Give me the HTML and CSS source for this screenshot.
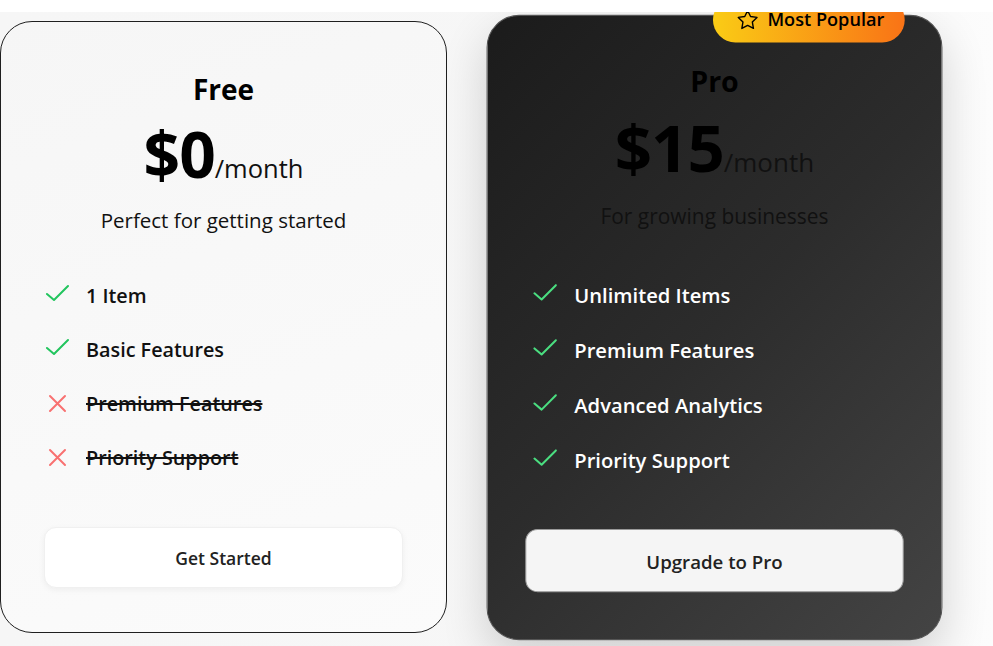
FILE: index.html
```html
<!DOCTYPE html>
<html lang="en">
<head>
<meta charset="utf-8">
<title>Pricing</title>
<link rel="stylesheet" href="styles.css">
</head>
<body>
<section class="stage">
  <article class="card card-free">
    <h2 class="plan">Free</h2>
    <div class="price"><span class="amount">$0</span><span class="period">/month</span></div>
    <p class="tagline">Perfect for getting started</p>
    <ul class="features">
      <li class="feature"><svg class="icon check" viewBox="0 0 24 24"><path d="M2 11 9 17 23 3"/></svg><span>1 Item</span></li>
      <li class="feature"><svg class="icon check" viewBox="0 0 24 24"><path d="M2 11 9 17 23 3"/></svg><span>Basic Features</span></li>
      <li class="feature off"><svg class="icon cross" viewBox="0 0 24 24"><path d="M5 5 20 20M20 5 5 20"/></svg><span>Premium Features</span></li>
      <li class="feature off"><svg class="icon cross" viewBox="0 0 24 24"><path d="M5 5 20 20M20 5 5 20"/></svg><span>Priority Support</span></li>
    </ul>
    <button class="btn btn-free">Get Started</button>
  </article>
  <article class="card card-pro">
    <div class="badge"><svg class="star" viewBox="0 0 24 24"><polygon points="12 2 15.09 8.26 22 9.27 17 14.14 18.18 21.02 12 17.77 5.82 21.02 7 14.14 2 9.27 8.91 8.26"/></svg><span class="badge-text">Most Popular</span></div>
    <h2 class="plan">Pro</h2>
    <div class="price"><span class="amount">$15</span><span class="period">/month</span></div>
    <p class="tagline">For growing businesses</p>
    <ul class="features">
      <li class="feature"><svg class="icon check" viewBox="0 0 24 24"><path d="M2 11 9 17 23 3"/></svg><span>Unlimited Items</span></li>
      <li class="feature"><svg class="icon check" viewBox="0 0 24 24"><path d="M2 11 9 17 23 3"/></svg><span>Premium Features</span></li>
      <li class="feature"><svg class="icon check" viewBox="0 0 24 24"><path d="M2 11 9 17 23 3"/></svg><span>Advanced Analytics</span></li>
      <li class="feature"><svg class="icon check" viewBox="0 0 24 24"><path d="M2 11 9 17 23 3"/></svg><span>Priority Support</span></li>
    </ul>
    <button class="btn btn-pro">Upgrade to Pro</button>
  </article>
</section>
</body>
</html>
```
FILE: styles.css
```css
* { box-sizing: border-box; }
html, body { margin: 0; padding: 0; background: #ffffff; }
body { font-family: "Open Sans", "Noto Sans", sans-serif; color: #000; }

.stage {
  margin-top: 12px;
  height: 634px;
  overflow: hidden;
  display: flex;
  align-items: flex-start;
  gap: 44px;
  padding-top: 9px;
  background: linear-gradient(90deg, #f6f6f6 0%, #f7f7f7 80%, #fcfcfc 100%);
}

.card {
  position: relative;
  width: 447px;
  flex: none;
  display: flex;
  flex-direction: column;
  align-items: stretch;
  padding: 49px 43px 44px;
  border-radius: 32px;
  text-align: center;
}

.card-free {
  border: 1px solid #1f1f1f;
  background: linear-gradient(160deg, #f6f6f6 0%, #fbfbfb 100%);
}

.card-pro {
  padding-top: 46px;
  padding-bottom: 46px;
  border: 1px solid #555;
  background: linear-gradient(135deg, #1b1b1b 0%, #2c2c2c 50%, #444444 100%);
  transform: scale(1.02);
  box-shadow: 0 18px 45px rgba(0, 0, 0, 0.16);
}

.plan {
  margin: 0;
  font-size: 28px;
  line-height: 36px;
  font-weight: 700;
  color: #000;
}

.price {
  margin-top: 11px;
  height: 72px;
  line-height: 72px;
  white-space: nowrap;
}
.amount {
  font-size: 64px;
  font-weight: 700;
  letter-spacing: -1px;
}
.period {
  font-size: 25.5px;
  font-weight: 400;
  color: #111;
}

.tagline {
  margin: 17px 0 0;
  font-size: 20.5px;
  line-height: 26px;
  color: #111;
}
.card-pro .tagline { margin-top: 18px; }

.features {
  list-style: none;
  margin: 47px 0 0;
  padding: 0;
  display: flex;
  flex-direction: column;
  gap: 24px;
  text-align: left;
}
.card-pro .features { margin-top: 49px; }
.feature {
  height: 30px;
  display: flex;
  align-items: center;
  gap: 17px;
  font-size: 19.8px;
  font-weight: 600;
  color: #111;
}
.feature.off span { text-decoration: line-through; text-decoration-thickness: 2px; }
.icon {
  width: 24px;
  height: 24px;
  flex: none;
  fill: none;
  stroke-width: 2;
  stroke-linecap: round;
  stroke-linejoin: round;
  margin-left: 1px;
}
.card-free .check { stroke: #22c55e; }
.card-pro .check { stroke: #4ade80; }
.cross { stroke: #f87171; }
.card-pro .feature { color: #ffffff; }

.btn {
  margin-top: 55px;
  height: 61px;
  border-radius: 12px;
  font-family: inherit;
  font-size: 17.5px;
  font-weight: 600;
  color: #222;
  cursor: pointer;
}
.btn-free {
  border: 1px solid #f0f0f0;
  background: #ffffff;
  box-shadow: 0 2px 6px rgba(0, 0, 0, 0.05);
}
.btn-pro {
  margin: 53px -6px 0;
  height: 62px;
  font-size: 18.3px;
  border: 1px solid #9a9a9a;
  background: #f5f5f5;
}

.badge {
  position: absolute;
  top: -18px;
  right: 36px;
  height: 44px;
  padding: 0 20px 0 23px;
  display: flex;
  align-items: center;
  gap: 8px;
  border-radius: 22px;
  background: linear-gradient(90deg, #facc15 0%, #f97316 100%);
  font-size: 17.8px;
  font-weight: 600;
  color: #000;
  white-space: nowrap;
}
.badge-text { line-height: 1; }
.star {
  width: 22px;
  height: 22px;
  fill: none;
  stroke: #000;
  stroke-width: 1.5;
  stroke-linejoin: round;
}
```
